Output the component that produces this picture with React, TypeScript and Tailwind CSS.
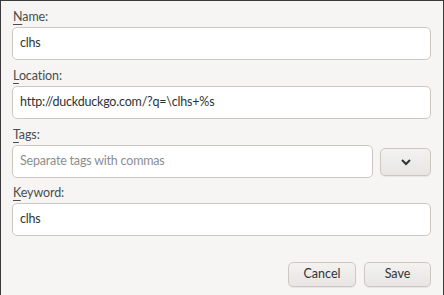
import React from "react";

const font = { fontFamily: 'Lato, "Noto Sans", sans-serif' };

function Label({ first, rest }: { first: string; rest: string }) {
  return (
    <div className="h-[20px] pl-[1px] text-[12.5px] leading-[20px] tracking-[-0.1px] text-[#4a4d4e]">
      <span className="underline decoration-[1px] underline-offset-[3px]">{first}</span>
      {rest}
    </div>
  );
}

function Field({ value, placeholder, className = "" }: { value?: string; placeholder?: string; className?: string }) {
  return (
    <div
      className={`flex h-[33px] items-center rounded-[5px] border border-[#cdc7c2] bg-white px-[7px] text-[12.5px] tracking-[-0.2px] ${className}`}
    >
      {value ? (
        <span className="text-[#2e3436]">{value}</span>
      ) : (
        <span className="text-[#8b8e8f]">{placeholder}</span>
      )}
    </div>
  );
}

function Button({ children, className = "" }: { children: React.ReactNode; className?: string }) {
  return (
    <div
      className={`flex items-center justify-center rounded-[5px] border border-[#cdc7c2] bg-gradient-to-b from-[#f4f2f1] to-[#e8e6e3] text-[12.5px] text-[#2e3436] shadow-[0_1px_0_rgba(0,0,0,0.06)] ${className}`}
    >
      {children}
    </div>
  );
}

export default function App() {
  return (
    <div
      style={font}
      className="flex h-[295px] w-[444px] flex-col border-l border-r border-t border-[#3a3a3a] bg-[#f6f5f4] pl-[11px] pr-[12px] pt-[6px]"
    >
      <Label first="N" rest="ame:" />
      <Field value="clhs" />
      <div className="mt-[6px]">
        <Label first="L" rest="ocation:" />
      </div>
      <Field value="http://duckduckgo.com/?q=\clhs+%s" />
      <div className="mt-[6px]">
        <Label first="T" rest="ags:" />
      </div>
      <div className="flex items-center gap-[7px]">
        <Field placeholder="Separate tags with commas" className="flex-1" />
        <Button className="h-[28px] w-[51px]">
          <svg width="12" height="8" viewBox="0 0 12 8">
            <path d="M2 2 L6 6 L10 2" fill="none" stroke="#2e3436" strokeWidth="2" />
          </svg>
        </Button>
      </div>
      <div className="mt-[5px]">
        <Label first="K" rest="eyword:" />
      </div>
      <Field value="clhs" />
      <div className="mt-[26px] flex justify-end gap-[8px]">
        <Button className="h-[25px] w-[68px]">Cancel</Button>
        <Button className="h-[25px] w-[67px]">Save</Button>
      </div>
    </div>
  );
}
